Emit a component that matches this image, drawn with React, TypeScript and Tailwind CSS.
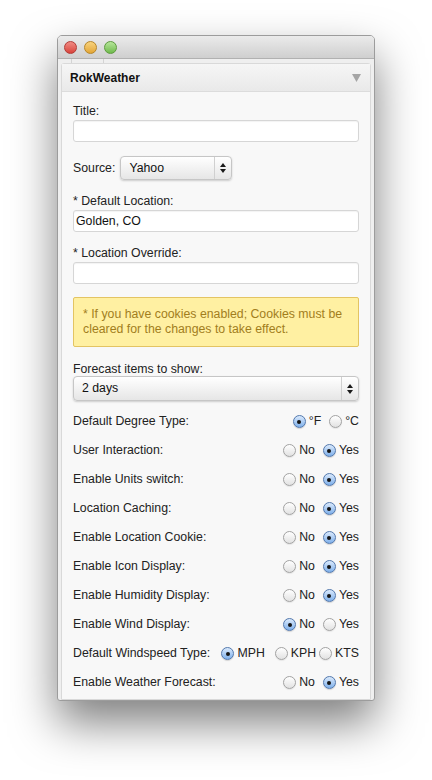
const font = { fontFamily: '"Liberation Sans", Arial, sans-serif' };

function Radio({ checked }: { checked?: boolean }) {
  if (checked) {
    return (
      <span className="flex h-[13px] w-[13px] shrink-0 items-center justify-center rounded-full border border-[#5378ad] bg-gradient-to-b from-[#dbeafc] to-[#7fb0ea] shadow-[0_1px_1px_rgba(0,0,0,0.15)]">
        <span className="h-[4px] w-[4px] rounded-full bg-[#151515]" />
      </span>
    );
  }
  return (
    <span className="h-[13px] w-[13px] shrink-0 rounded-full border border-[#a2a2a2] bg-gradient-to-b from-white to-[#e2e2e2] shadow-[0_1px_1px_rgba(0,0,0,0.08)]" />
  );
}

function Option({ label, checked, className = "" }: { label: string; checked?: boolean; className?: string }) {
  return (
    <span className={`flex items-center gap-[3px] ${className}`}>
      <Radio checked={checked} />
      <span>{label}</span>
    </span>
  );
}

function Arrows() {
  return (
    <svg width="6" height="10" viewBox="0 0 6 10">
      <path d="M3 0 L6 4 L0 4 Z" fill="#1a1a1a" />
      <path d="M3 10 L6 6 L0 6 Z" fill="#1a1a1a" />
    </svg>
  );
}

function Select({ value, className = "" }: { value: string; className?: string }) {
  return (
    <div className={`flex items-stretch rounded-[4px] border border-[#c6c6c6] bg-gradient-to-b from-white to-[#e6e6e6] shadow-[0_1px_2px_rgba(0,0,0,0.18)] ${className}`}>
      <span className="flex flex-1 items-center pl-[8px] text-[#111]">{value}</span>
      <span className="flex w-[17px] items-center justify-center border-l border-[#d0d0d0]">
        <Arrows />
      </span>
    </div>
  );
}

function Input({ value = "" }: { value?: string }) {
  return (
    <div className="flex h-[22px] items-center rounded-[3px] border border-[#d6d6d6] bg-white px-[2px] text-[#111] shadow-[inset_0_1px_1px_rgba(0,0,0,0.05)]">
      {value}
    </div>
  );
}

type Row = { label: string; options: { label: string; checked?: boolean; className?: string }[] };

const yes: Row["options"] = [{ label: "No" }, { label: "Yes", checked: true }];

const rows: Row[] = [
  { label: "Default Degree Type:", options: [{ label: "°F", checked: true }, { label: "°C" }] },
  { label: "User Interaction:", options: yes },
  { label: "Enable Units switch:", options: yes },
  { label: "Location Caching:", options: yes },
  { label: "Enable Location Cookie:", options: yes },
  { label: "Enable Icon Display:", options: yes },
  { label: "Enable Humidity Display:", options: yes },
  { label: "Enable Wind Display:", options: [{ label: "No", checked: true }, { label: "Yes" }] },
  {
    label: "Default Windspeed Type:",
    options: [
      { label: "MPH", checked: true, className: "mr-[2px]" },
      { label: "KPH", className: "-mr-[5px]" },
      { label: "KTS" },
    ],
  },
  { label: "Enable Weather Forecast:", options: yes },
];

export default function App() {
  return (
    <div className="h-[780px] w-[432px] overflow-hidden bg-white pl-[57px] pt-[35px] text-[12.3px] text-[#222]" style={font}>
      <div className="flex h-[666px] w-[318px] flex-col overflow-hidden rounded-t-[5px] rounded-b-[3px] border border-[#9c9c9c] bg-[#efefef] shadow-[0_22px_45px_rgba(0,0,0,0.5)]">
        {/* Title bar */}
        <div className="flex h-[23px] shrink-0 items-center gap-[7px] border-b border-[#b1b1b1] bg-gradient-to-b from-[#ebebeb] to-[#cfcfcf] pl-[6px]">
          <span className="h-[13px] w-[13px] rounded-full border border-[#b23b35] bg-gradient-to-b from-[#f08a84] to-[#d8423b]" />
          <span className="h-[13px] w-[13px] rounded-full border border-[#b78628] bg-gradient-to-b from-[#f8d37c] to-[#e3a634]" />
          <span className="h-[13px] w-[13px] rounded-full border border-[#5d9a3d] bg-gradient-to-b from-[#b6e69a] to-[#6fba4b]" />
        </div>

        {/* Tab stubs */}
        <div className="flex h-[4px] shrink-0">
          <span className="ml-[13px] w-[33px] border-x border-[#d4d4d4]" />
        </div>

        {/* Widget panel */}
        <div className="mx-[3px] flex flex-1 flex-col rounded-t-[3px] border border-[#d9d9d9] bg-[#f8f8f8]">
          <div className="flex h-[28px] shrink-0 items-center justify-between border-b border-[#dcdcdc] bg-gradient-to-b from-[#f6f6f6] to-[#e9e9e9] pl-[8px] pr-[9px]">
            <span className="text-[12px] font-bold text-[#111]">RokWeather</span>
            <svg width="9" height="8" viewBox="0 0 9 8">
              <path d="M0 0 H9 L4.5 8 Z" fill="#a5a5a5" />
            </svg>
          </div>

          <div className="flex flex-col px-[11px] pt-[12px]">
            <label className="leading-[15px]">Title:</label>
            <div className="mt-[1px]">
              <Input />
            </div>

            <div className="mt-[14px] flex items-center gap-[5px]">
              <span>Source:</span>
              <Select value="Yahoo" className="h-[24px] w-[112px]" />
            </div>

            <label className="mt-[14px] leading-[15px]">* Default Location:</label>
            <div className="mt-[1px]">
              <Input value="Golden, CO" />
            </div>

            <label className="mt-[14px] leading-[15px]">* Location Override:</label>
            <div className="mt-[1px]">
              <Input />
            </div>

            <div className="mt-[13px] rounded-[2px] border border-[#e3c463] bg-[#fff0a2] px-[9px] py-[9px] leading-[15px] text-[#a27e1d]">
              * If you have cookies enabled; Cookies must be cleared for the changes to take effect.
            </div>

            <label className="mt-[15px] leading-[15px]">Forecast items to show:</label>
            <Select value="2 days" className="-mt-[1px] h-[25px]" />

            <div className="mt-[6px] flex flex-col">
              {rows.map((row) => (
                <div key={row.label} className="flex h-[29px] items-center justify-between">
                  <span>{row.label}</span>
                  <span className="flex items-center gap-[8px]">
                    {row.options.map((o) => (
                      <Option key={o.label} label={o.label} checked={o.checked} className={o.className} />
                    ))}
                  </span>
                </div>
              ))}
            </div>
          </div>
        </div>
      </div>
    </div>
  );
}
